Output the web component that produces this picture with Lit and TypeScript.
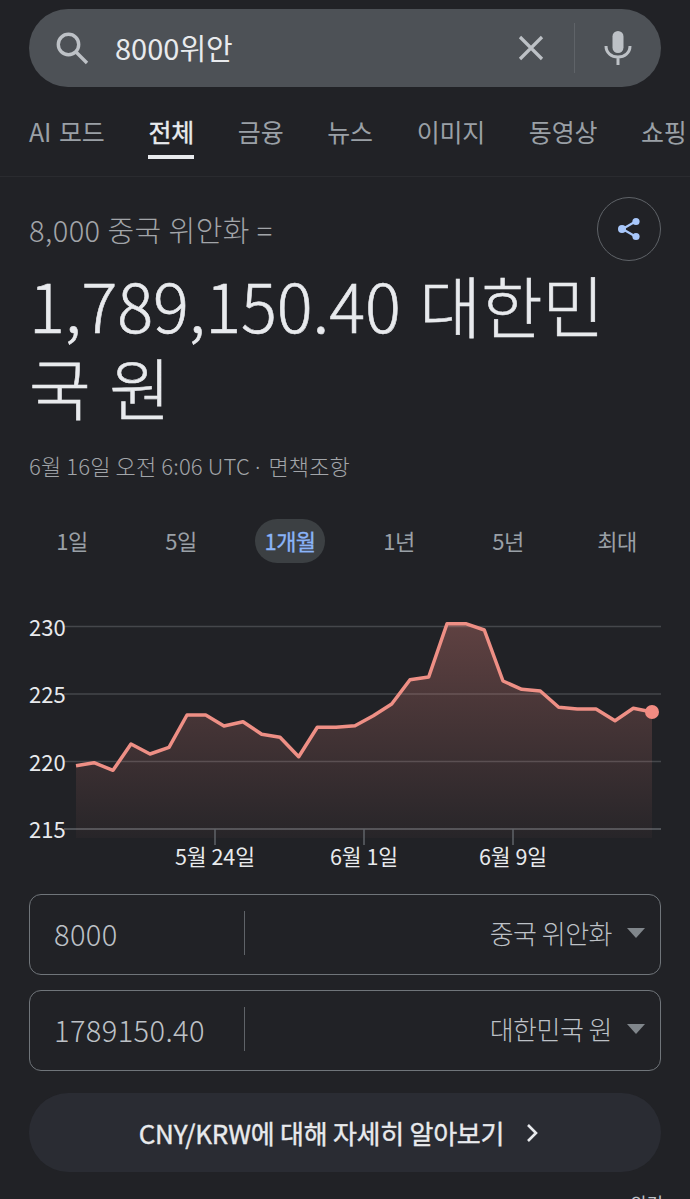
import { LitElement, html, css, svg } from "lit";
import { customElement } from "lit/decorators.js";

const TABS = ["AI 모드", "전체", "금융", "뉴스", "이미지", "동영상", "쇼핑"];
const RANGES = ["1일", "5일", "1개월", "1년", "5년", "최대"];

// Traced from the reference, in page pixels relative to the chart's top (y - 600).
const POINTS: [number, number][] = [
  [76, 165.7], [94, 162.7], [113, 170.3], [131, 144], [150, 154], [169, 147.3],
  [187, 115], [205.7, 115], [224, 126], [243, 121.7], [261.7, 134.3], [280, 137.3],
  [298.7, 156.7], [317.3, 127.3], [336, 127.3], [355, 125.7], [373.3, 115.7],
  [391.7, 104], [410, 79.7], [428.7, 77], [447, 23.7], [465.7, 23.7], [484.3, 30],
  [503, 81], [521.7, 89.3], [540.3, 91], [558.7, 107.3], [577.3, 109], [596, 109],
  [615, 120.7], [633.3, 108.3], [652, 112],
];
const GRID: [string, number][] = [["230", 26.5], ["225", 94], ["220", 161.5], ["215", 229]];
const TICKS: [string, number][] = [["5월 24일", 215], ["6월 1일", 364], ["6월 9일", 513]];

@customElement("app-root")
export class AppRoot extends LitElement {
  static styles = css`
    :host {
      display: block;
      width: 690px;
      height: 1199px;
      overflow: hidden;
      background: #212226;
      color: #e8eaed;
      font-family: "Noto Sans CJK KR", "Noto Sans", sans-serif;
    }
    .search-wrap { padding: 9px 29px 0; }
    .search {
      height: 78px;
      border-radius: 39px;
      background: #4d5156;
      display: flex;
      align-items: center;
      padding: 0 29px 0 26px;
    }
    .search-q { flex: 1; margin-left: 26px; padding-bottom: 2px; font-size: 29px; color: #e8eaed; }
    .search-sep { width: 1px; height: 50px; background: #5f6368; margin: 0 29px 0 30px; }
    .tabs {
      height: 89px;
      border-bottom: 1px solid #2a2b2f;
      display: flex;
      gap: 43.8px;
      padding: 0 0 0 29px;
      white-space: nowrap;
      overflow: hidden;
    }
    .tab { position: relative; padding-top: 26px; font-size: 25px; line-height: 36px; color: #9aa0a6; letter-spacing: -0.2px; word-spacing: 2.5px; }
    .tab.on { color: #e8eaed; -webkit-text-stroke: 0.4px #e8eaed; }
    .tab.on::after {
      content: "";
      position: absolute;
      left: 0;
      right: 0;
      top: 68px;
      height: 4px;
      background: #e8eaed;
    }
    .result { padding: 19px 29px 0; }
    .from-row { display: flex; justify-content: space-between; align-items: center; height: 66px; }
    .from { font-size: 29px; font-weight: 300; color: #a2a5a9; letter-spacing: 0.45px; }
    .share {
      width: 62px;
      height: 62px;
      border: 1px solid #5f6368;
      border-radius: 50%;
      display: flex;
      align-items: center;
      justify-content: center;
    }
    .big {
      margin: 1px 0 0;
      max-width: 610px;
      font-size: 67px;
      line-height: 82px;
      font-weight: 300;
      color: #e8eaed;
      -webkit-text-stroke: 0.6px #e8eaed;
      letter-spacing: -0.1px;
      word-spacing: 4px;
    }
    .stamp { height: 30px; margin-top: 23px; font-size: 22px; line-height: 30px; font-weight: 300; color: #a2a5a9; letter-spacing: 0.15px; }
    .stamp .dot { font-family: "Noto Sans", sans-serif; margin-right: 3px; }
    .ranges { display: flex; justify-content: space-between; height: 44px; margin-top: 39px; padding: 0 9px 0 8px; }
    .range {
      width: 70px;
      height: 44px;
      border-radius: 22px;
      font-size: 22px;
      line-height: 42px;
      text-align: center;
      color: #9aa0a6;
      letter-spacing: -0.6px;
    }
    .range.on { background: #3c4043; color: #8ab4f8; -webkit-text-stroke: 0.3px #8ab4f8; }
    .chart { display: block; margin-top: 37px; }
    .chart text { font-family: "Noto Sans CJK KR", "Noto Sans", sans-serif; fill: #e8eaed; }
    .convert { padding: 0 29px; display: flex; flex-direction: column; gap: 15px; margin-top: 19px; }
    .field {
      height: 79px;
      border: 1px solid #70757a;
      border-radius: 12px;
      display: flex;
      align-items: center;
    }
    .field-value { width: 190px; padding: 0 0 3px 24px; font-size: 29px; font-weight: 300; color: #bdc1c6; letter-spacing: 0.4px; }
    .field-sep { width: 1px; height: 44px; margin-top: -3px; background: #5f6368; }
    .field-unit { flex: 1; text-align: right; font-size: 26px; font-weight: 300; color: #bdc1c6; letter-spacing: -0.5px; padding-bottom: 5px; }
    .caret {
      width: 0;
      height: 0;
      margin: -3px 15px 0 15px;
      border-left: 9px solid transparent;
      border-right: 9px solid transparent;
      border-top: 10px solid #80868b;
    }
    .more {
      margin: 22px 29px 0;
      height: 79px;
      border-radius: 40px;
      background: #2a2c33;
      display: flex;
      align-items: center;
      justify-content: center;
      gap: 21px;
      padding-right: 12px;
      font-size: 26px;
      -webkit-text-stroke: 0.4px #e8eaed;
      letter-spacing: -0.25px;
      color: #e8eaed;
    }
    .tail { margin-top: 18px; padding-right: 27px; text-align: right; font-size: 18px; line-height: 26px; color: #bdc1c6; }
  `;

  private renderChart() {
    const line = POINTS.map((p) => p.join(",")).join(" ");
    const area = `76,238 ${line} 652,238`;
    const [endX, endY] = POINTS[POINTS.length - 1];
    return html`<svg class="chart" width="690" height="275" viewBox="0 0 690 275">
      <defs>
        <linearGradient id="fill" x1="0" y1="20" x2="0" y2="238" gradientUnits="userSpaceOnUse">
          <stop offset="0" stop-color="#f28b82" stop-opacity="0.3"></stop>
          <stop offset="1" stop-color="#f28b82" stop-opacity="0.03"></stop>
        </linearGradient>
      </defs>
      ${GRID.map(([label, y], i) => svg`
        <line x1="64" x2="661" y1=${y} y2=${y} stroke=${i === 3 ? "#5f6368" : "#45474b"} stroke-width="1.5"></line>
        <text x="29" y=${y + 9} font-size="22">${label}</text>
      `)}
      <polygon points=${area} fill="url(#fill)"></polygon>
      <polyline points=${line} fill="none" stroke="#ee8f85" stroke-width="3.5" stroke-linejoin="round"></polyline>
      <circle cx=${endX} cy=${endY} r="7" fill="#f28b82"></circle>
      ${TICKS.map(([label, x]) => svg`
        <line x1=${x} x2=${x} y1="229" y2="245" stroke="#5f6368" stroke-width="1.5"></line>
        <text x=${x} y="265" font-size="21.5" text-anchor="middle">${label}</text>
      `)}
    </svg>`;
  }

  render() {
    return html`
      <div class="search-wrap">
        <div class="search">
          <svg width="34" height="34" viewBox="0 0 34 34" fill="none" stroke="#bdc1c6" stroke-width="3.4">
            <circle cx="13.5" cy="13.5" r="10.2"></circle>
            <path d="M21 21l11 11"></path>
          </svg>
          <div class="search-q">8000위안</div>
          <svg width="26" height="26" viewBox="0 0 26 26" stroke="#bdc1c6" stroke-width="3.2">
            <path d="M2 2l22 22M24 2L2 24"></path>
          </svg>
          <div class="search-sep"></div>
          <svg width="28" height="36" viewBox="0 0 28 36" fill="none">
            <rect x="8.5" y="1" width="11" height="22" rx="5.5" fill="#bdc1c6"></rect>
            <path d="M2 16c0 7 5.5 11 12 11s12-4 12-11M14 27v8" stroke="#bdc1c6" stroke-width="3"></path>
          </svg>
        </div>
      </div>
      <nav class="tabs">
        ${TABS.map((t) => html`<div class="tab ${t === "전체" ? "on" : ""}">${t}</div>`)}
      </nav>
      <section class="result">
        <div class="from-row">
          <div class="from">8,000 중국 위안화 =</div>
          <div class="share">
            <svg width="26" height="26" viewBox="0 0 26 26" fill="#a8c7fa">
              <path d="M19.5 5.5L6.5 13l13 7.5" fill="none" stroke="#a8c7fa" stroke-width="2.2"></path>
              <circle cx="6" cy="13" r="4"></circle>
              <circle cx="20" cy="5.5" r="3.6"></circle>
              <circle cx="20" cy="20.5" r="3.6"></circle>
            </svg>
          </div>
        </div>
        <h1 class="big">1,789,150.40 대한민국 원</h1>
        <div class="stamp">6월 16일 오전 6:06 UTC <span class="dot">·</span> 면책조항</div>
        <div class="ranges">
          ${RANGES.map((r) => html`<div class="range ${r === "1개월" ? "on" : ""}">${r}</div>`)}
        </div>
      </section>
      ${this.renderChart()}
      <section class="convert">
        <div class="field">
          <div class="field-value">8000</div>
          <div class="field-sep"></div>
          <div class="field-unit">중국 위안화</div>
          <div class="caret"></div>
        </div>
        <div class="field">
          <div class="field-value">1789150.40</div>
          <div class="field-sep"></div>
          <div class="field-unit">대한민국 원</div>
          <div class="caret"></div>
        </div>
      </section>
      <div class="more">
        <span>CNY/KRW에 대해 자세히 알아보기</span>
        <svg width="14" height="20" viewBox="0 0 14 20" fill="none" stroke="#e8eaed" stroke-width="2.6">
          <path d="M3 2l8 8-8 8"></path>
        </svg>
      </div>
      <div class="tail">의견</div>
    `;
  }
}
